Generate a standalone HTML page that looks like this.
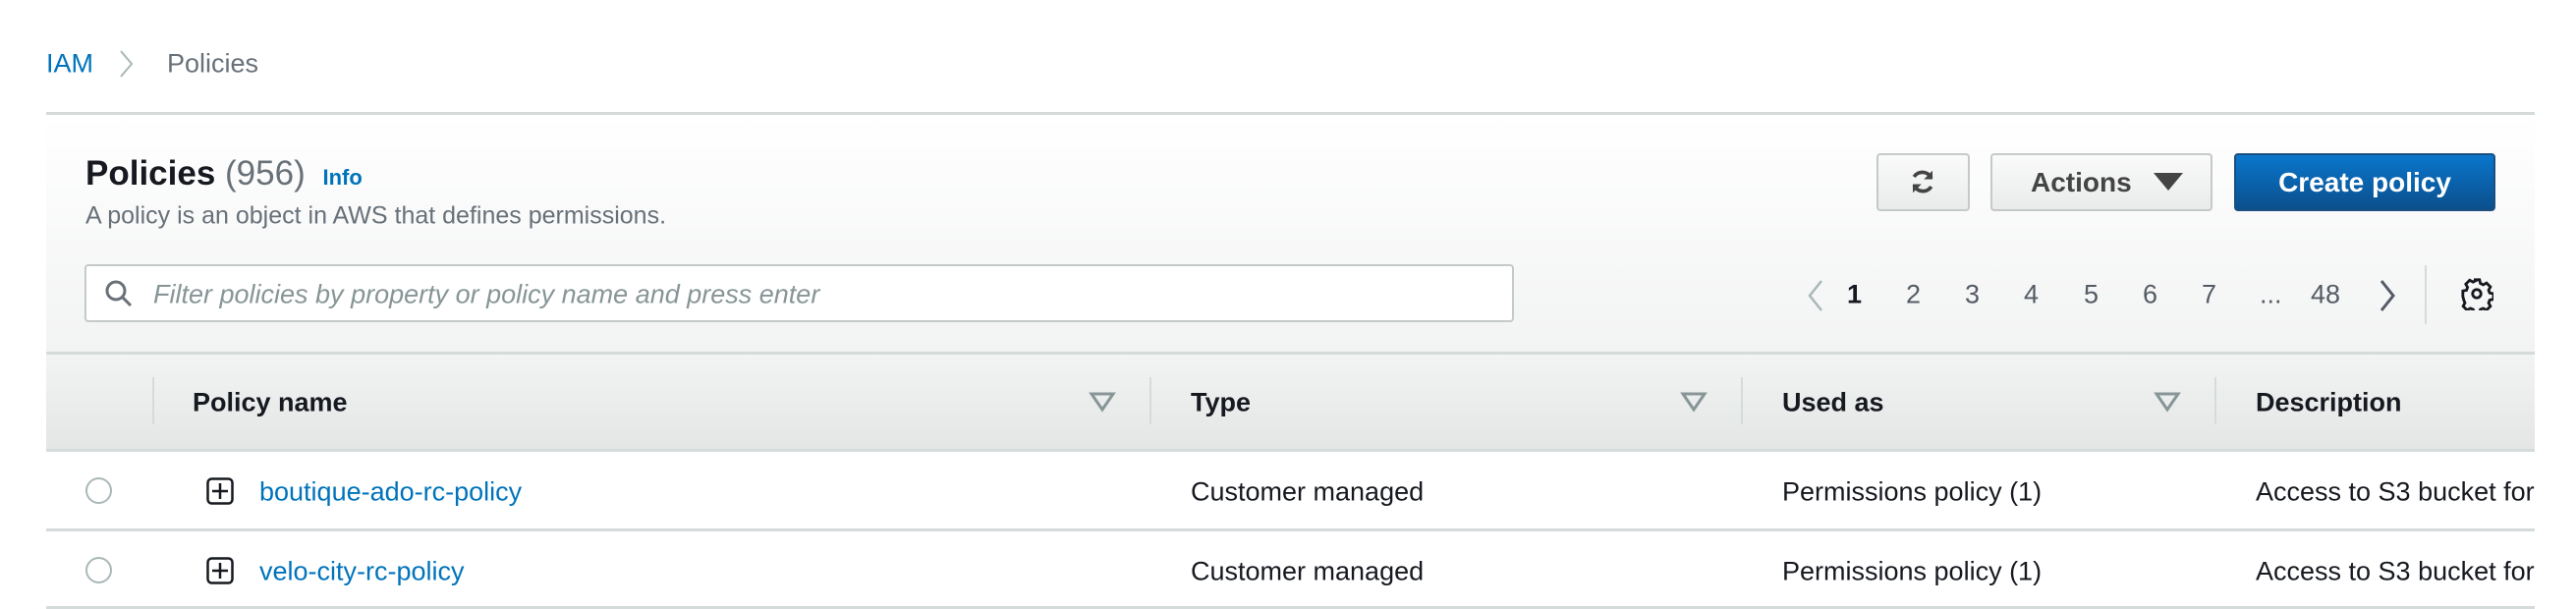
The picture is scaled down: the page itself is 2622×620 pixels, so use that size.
<!DOCTYPE html>
<html><head><meta charset="utf-8"><style>
*{box-sizing:border-box;margin:0;padding:0}
body{width:2622px;height:620px;background:#fff;font-family:"Liberation Sans",Arial,sans-serif;position:relative;overflow:hidden;color:#16191f}
.a{position:absolute;white-space:nowrap}
.v{transform:translateY(-50%)}
</style></head><body>
<div class="a v" style="left:47px;top:65px;font-size:27px;color:#0073bb">IAM</div>
<svg class="a" style="left:120px;top:50px" width="18" height="30"><path d="M3 2 L14 15 L3 28" fill="none" stroke="#aab7b8" stroke-width="2"/></svg>
<div class="a v" style="left:170px;top:65px;font-size:27px;color:#687078">Policies</div>

<div class="a" style="left:47px;top:114px;width:2533px;height:246px;border-top:3px solid #d5dbdb;background:linear-gradient(#fff,#f2f3f3)"></div>
<div class="a v" style="left:87px;top:177px;font-size:35px;font-weight:bold;color:#16191f">Policies <span style="font-weight:normal;color:#687078">(956)</span> <span style="font-size:22px;color:#0073bb;margin-left:8px">Info</span></div>
<div class="a v" style="left:87px;top:220px;font-size:25px;color:#687078">A policy is an object in AWS that defines permissions.</div>

<div class="a" style="left:1910px;top:156px;width:95px;height:59px;border:2px solid #c5c9c9;border-radius:4px;background:linear-gradient(#fafafa,#e9ebeb)"></div>
<svg class="a" style="left:1942px;top:170px" width="30" height="30" viewBox="0 0 24 24"><path d="M19 9A8 8 0 0 0 5 8M5 15a8 8 0 0 0 14 1" fill="none" stroke="#444" stroke-width="3"/><path d="M20 3v7h-7z M4 21v-7h7z" fill="#444"/></svg>
<div class="a" style="left:2026px;top:156px;width:226px;height:59px;border:2px solid #c5c9c9;border-radius:4px;background:linear-gradient(#fafafa,#e9ebeb)"></div>
<div class="a v" style="left:2067px;top:186px;font-size:28px;font-weight:bold;color:#444">Actions</div>
<svg class="a" style="left:2192px;top:176px" width="30" height="20"><path d="M0 0H30L15 18Z" fill="#444"/></svg>
<div class="a" style="left:2274px;top:156px;width:266px;height:59px;border:2px solid #1b4f80;border-radius:4px;background:linear-gradient(#0a76cc,#0b4f8c)"></div>
<div class="a v" style="left:2407px;top:186px;transform:translate(-50%,-50%);font-size:28px;font-weight:bold;color:#fff">Create policy</div>

<div class="a" style="left:86px;top:269px;width:1455px;height:59px;border:2px solid #c5c9c9;border-radius:4px;background:#fff"></div>
<svg class="a" style="left:106px;top:284px" width="30" height="30"><circle cx="12" cy="12" r="9" fill="none" stroke="#687078" stroke-width="3"/><path d="M18 18L27 27" stroke="#687078" stroke-width="3"/></svg>
<div class="a v" style="left:156px;top:300px;font-size:27px;font-style:italic;color:#879596">Filter policies by property or policy name and press enter</div>

<svg class="a" style="left:1838px;top:284px" width="20" height="34"><path d="M16 2L4 17L16 32" fill="none" stroke="#aab7b8" stroke-width="2.5"/></svg>
<div class="a v" style="left:1880px;top:300px;font-size:27px;font-weight:bold;color:#16191f">1</div>
<div class="a v" style="left:1940px;top:300px;font-size:27px;color:#545b64">2</div>
<div class="a v" style="left:2000px;top:300px;font-size:27px;color:#545b64">3</div>
<div class="a v" style="left:2060px;top:300px;font-size:27px;color:#545b64">4</div>
<div class="a v" style="left:2121px;top:300px;font-size:27px;color:#545b64">5</div>
<div class="a v" style="left:2181px;top:300px;font-size:27px;color:#545b64">6</div>
<div class="a v" style="left:2241px;top:300px;font-size:27px;color:#545b64">7</div>
<div class="a v" style="left:2300px;top:300px;font-size:27px;color:#545b64">...</div>
<div class="a v" style="left:2352px;top:300px;font-size:27px;color:#545b64">48</div>
<svg class="a" style="left:2420px;top:284px" width="20" height="34"><path d="M4 2L16 17L4 32" fill="none" stroke="#545b64" stroke-width="3"/></svg>
<div class="a" style="left:2468px;top:270px;width:2px;height:60px;background:#d5dbdb"></div>
<svg class="a" style="left:2504px;top:282px" width="34" height="34" viewBox="0 0 24 24"><path d="M10 2h4l.6 2.6 2 1 2.4-1.3 2.8 2.8-1.3 2.4.8 2 2.7.5v4l-2.7.6-.8 2 1.3 2.4-2.8 2.8-2.4-1.3-2 .8-.6 2.7h-4l-.6-2.7-2-.8-2.4 1.3-2.8-2.8 1.3-2.4-.8-2L2 14V10l2.6-.5.8-2-1.3-2.4 2.8-2.8 2.4 1.3 2-1z" fill="none" stroke="#16191f" stroke-width="2"/><circle cx="12" cy="12" r="3" fill="none" stroke="#16191f" stroke-width="2"/></svg>

<div class="a" style="left:47px;top:358px;width:2533px;height:102px;border-top:3px solid #d5dbdb;border-bottom:3px solid #d5dbdb;background:linear-gradient(#f2f3f3,#e4e6e6)"></div>
<div class="a" style="left:155px;top:384px;width:2px;height:48px;background:#d5dbdb"></div>
<div class="a" style="left:1170px;top:384px;width:2px;height:48px;background:#d5dbdb"></div>
<div class="a" style="left:1772px;top:384px;width:2px;height:48px;background:#d5dbdb"></div>
<div class="a" style="left:2254px;top:384px;width:2px;height:48px;background:#d5dbdb"></div>
<div class="a v" style="left:196px;top:410px;font-size:27px;font-weight:bold;color:#16191f">Policy name</div>
<div class="a v" style="left:1212px;top:410px;font-size:27px;font-weight:bold;color:#16191f">Type</div>
<div class="a v" style="left:1814px;top:410px;font-size:27px;font-weight:bold;color:#16191f">Used as</div>
<div class="a v" style="left:2296px;top:410px;font-size:27px;font-weight:bold;color:#16191f">Description</div>
<svg class="a" style="left:1108px;top:398px" width="28" height="22"><path d="M3 3H25L14 19Z" fill="none" stroke="#879596" stroke-width="3"/></svg>
<svg class="a" style="left:1710px;top:398px" width="28" height="22"><path d="M3 3H25L14 19Z" fill="none" stroke="#879596" stroke-width="3"/></svg>
<svg class="a" style="left:2192px;top:398px" width="28" height="22"><path d="M3 3H25L14 19Z" fill="none" stroke="#879596" stroke-width="3"/></svg>

<div class="a" style="left:47px;top:538px;width:2533px;height:3px;background:#d5dbdb"></div>
<div class="a" style="left:47px;top:617px;width:2533px;height:3px;background:#d5dbdb"></div>

<div class="a" style="left:87px;top:486px;width:27px;height:27px;border:2px solid #aab7b8;border-radius:50%"></div>
<div class="a" style="left:87px;top:567px;width:27px;height:27px;border:2px solid #aab7b8;border-radius:50%"></div>
<svg class="a" style="left:210px;top:486px" width="28" height="28"><rect x="1.5" y="1.5" width="25" height="25" rx="4" fill="none" stroke="#16191f" stroke-width="2.5"/><path d="M14 6V22M6 14H22" stroke="#16191f" stroke-width="2.5"/></svg>
<svg class="a" style="left:210px;top:567px" width="28" height="28"><rect x="1.5" y="1.5" width="25" height="25" rx="4" fill="none" stroke="#16191f" stroke-width="2.5"/><path d="M14 6V22M6 14H22" stroke="#16191f" stroke-width="2.5"/></svg>
<div class="a v" style="left:264px;top:501px;font-size:27px;color:#0073bb">boutique-ado-rc-policy</div>
<div class="a v" style="left:264px;top:582px;font-size:27px;color:#0073bb">velo-city-rc-policy</div>
<div class="a v" style="left:1212px;top:501px;font-size:27px">Customer managed</div>
<div class="a v" style="left:1212px;top:582px;font-size:27px">Customer managed</div>
<div class="a v" style="left:1814px;top:501px;font-size:27px">Permissions policy (1)</div>
<div class="a v" style="left:1814px;top:582px;font-size:27px">Permissions policy (1)</div>
<div class="a" style="left:2296px;top:470px;width:284px;height:140px;overflow:hidden">
<div class="a v" style="left:0;top:31px;font-size:27px">Access to S3 bucket for</div>
<div class="a v" style="left:0;top:112px;font-size:27px">Access to S3 bucket for</div>
</div>
</body></html>
